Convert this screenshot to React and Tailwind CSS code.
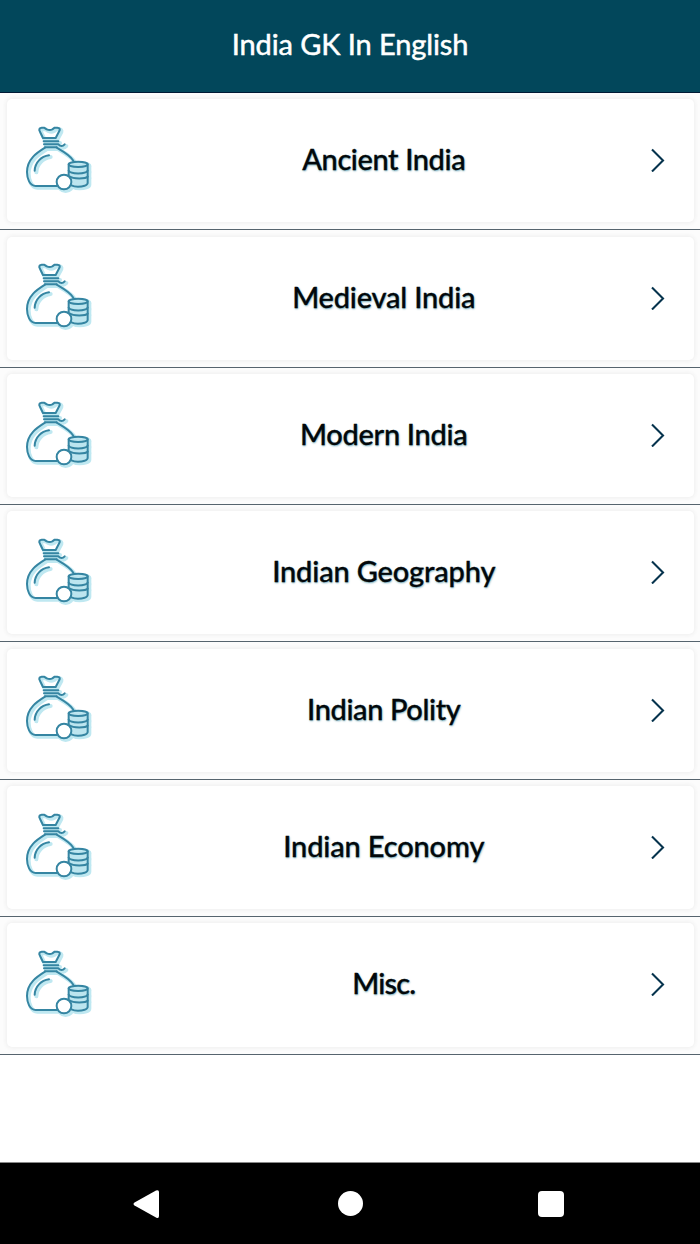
import clsx from "clsx";

const topics = [
  { title: "Ancient India", spacing: "tracking-[-0.400px]" },
  { title: "Medieval India", spacing: "tracking-[-0.200px]" },
  { title: "Modern India", spacing: "tracking-[-0.300px]" },
  { title: "Indian Geography", spacing: "tracking-[-0.150px]" },
  { title: "Indian Polity", spacing: "tracking-[-0.400px]" },
  { title: "Indian Economy", spacing: "tracking-[-0.150px]" },
  { title: "Misc.", spacing: "tracking-[-0.800px]" },
];

function BagLines() {
  return (
    <>
      <path d="M84 69L73 46Q72 39 80 38H87L95 43Q104 47 112 43L119 38H127Q136 39 134 46L122 69Z" />
      <path d="M86 79H130M87 88H130L135 92Q143 95 149 88M90 97H125" />
      <path d="M90 98C66 113 36 132 36 171C36 190 44 213 62 213H126M125 98C144 109 164 119 175 137" />
      <path d="M59 167C60 143 78 124 102 121" />
      <path d="M161 148V180M218 148V204C218 211 203 215 189 215C182 215 173 213 169 211" />
      <ellipse cx="189.500" cy="148" rx="28.500" ry="8" />
      <path d="M161 167C166 178 213 178 218 167M163 184C174 193 213 192 218 185" />
      <circle cx="147" cy="201" r="22" />
    </>
  );
}

function MoneyBag() {
  return (
    <svg
      className="mb-[2px] h-[90px] w-[90px] shrink-0"
      viewBox="0 0 270 270"
      fill="none"
      strokeLinecap="round"
      strokeLinejoin="round"
    >
      <g stroke="#bfe8f1" strokeWidth="12" transform="translate(5 5)">
        <BagLines />
      </g>
      <path d="M161 148H218V205Q190 222 161 209Z" fill="#bce5ef" />
      <circle cx="147" cy="201" r="22" fill="#fff" />
      <g stroke="#3585a2" strokeWidth="6">
        <BagLines />
      </g>
    </svg>
  );
}

function TopicRow({ title, spacing }) {
  return (
    <div className="h-[137.360px] border-b border-[#56646e] bg-[#fcfcfc] px-[6.500px] pt-[6.300px] pb-[7px]">
      <div className="flex h-full items-center rounded-[5px] bg-white pr-[28px] pl-[8.500px] shadow-[0_0_4px_1px_#eeeeee]">
        <MoneyBag />
        <h2
          className={clsx(
            "flex-1 pb-[3px] pl-[13px] text-center text-[29px] leading-9 font-medium whitespace-nowrap text-[#02080b] [-webkit-text-stroke:0.3px_#02080b] [text-shadow:0.5px_1px_2px_#6ba5b5]",
            spacing
          )}
        >
          {title}
        </h2>
        <svg className="mb-px h-6 w-4" viewBox="0 0 16 24" fill="none">
          <path d="M2 1.500L13 12.500L2 23.500" stroke="#06334d" strokeWidth="2.100" />
        </svg>
      </div>
    </div>
  );
}

export default function App() {
  return (
    <div className="flex h-[1244px] w-[700px] flex-col overflow-hidden bg-white font-['Lato',sans-serif]">
      <header className="flex h-[93px] shrink-0 justify-center border-b border-[#001a35] bg-[#02475b] pt-[26px]">
        <h1 className="text-[29px] leading-9 tracking-[-0.100px] text-white [-webkit-text-stroke:0.5px_white]">
          India GK In English
        </h1>
      </header>
      <main className="flex-1">
        {topics.map((topic) => (
          <TopicRow key={topic.title} {...topic} />
        ))}
      </main>
      <nav className="flex h-[82px] shrink-0 items-center border-t border-[#888888] bg-black px-[133px] text-white">
        <svg className="h-7 w-[26px]" viewBox="0 0 26 28" fill="currentColor">
          <path d="M1.500 12.500L23 0.500Q26 -0.500 26 2V26Q26 29 23 27.500L1.500 15.500Q-0.500 14 1.500 12.500Z" />
        </svg>
        <div className="ml-[178.500px] h-[25px] w-[25px] rounded-full bg-white" />
        <div className="ml-[175.500px] h-[26px] w-[26px] rounded-sm bg-white" />
      </nav>
    </div>
  );
}
